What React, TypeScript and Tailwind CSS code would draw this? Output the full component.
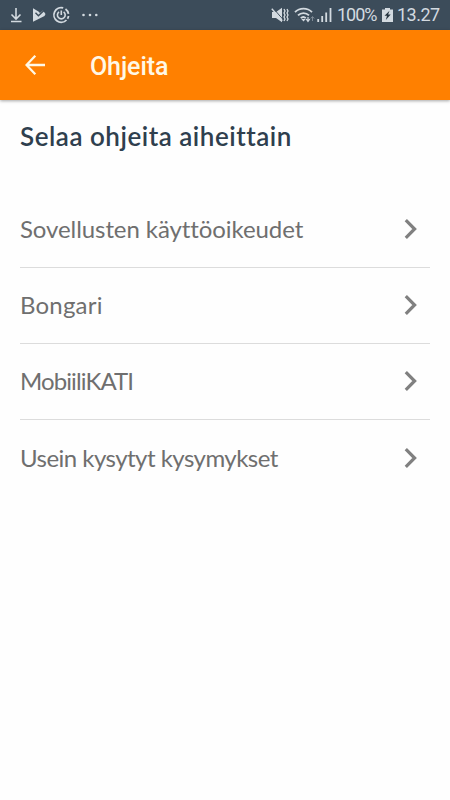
import clsx from 'clsx';

const topics = [
  { label: 'Sovellusten käyttöoikeudet', tracking: 'tracking-[-0.08px]' },
  { label: 'Bongari', tracking: 'tracking-[0.2px]' },
  { label: 'MobiiliKATI', tracking: 'tracking-[-0.9px]' },
  { label: 'Usein kysytyt kysymykset', tracking: 'tracking-[-0.53px]' },
];

function StatusBar() {
  return (
    <div className="flex h-[30px] items-center bg-[#3c4c5a] font-['Roboto',sans-serif] text-[#d3dae0]">
      {/* Notifications */}
      <svg className="h-[30px] w-[110px]" viewBox="0 0 110 30" fill="none" stroke="currentColor">
        <path d="M16 8v11M11.5 14.5 16 19l4.500-4.500M11 21.500h10.500" strokeWidth="1.600" />
        <path d="M33 8.300 38.500 11.500 40 13l3-2.500 2.500 3.500-1 2L33 21.800Z" fill="currentColor" stroke="none" />
        <path d="m35.500 12.800 2.900 3 5.600-5.300" stroke="#3c4c5a" strokeWidth="1.400" />
        <path d="M63.200 7.900A7.300 7.300 0 1 0 66.500 20M65.500 8.900a7.300 7.300 0 0 1 3 5M68.500 16a7.300 7.300 0 0 1-1 2.800" strokeWidth="1.800" />
        <path d="M59 11.800a3.900 3.900 0 1 0 4.600 0M61.300 10.500v4.500" strokeWidth="1.600" />
        <g fill="currentColor" stroke="none">
          <circle cx="83.500" cy="15" r="1.300" />
          <circle cx="90" cy="15" r="1.300" />
          <circle cx="96.300" cy="15" r="1.300" />
        </g>
      </svg>

      {/* Sound, wifi and signal */}
      <svg className="ml-auto h-[30px] w-[64px]" viewBox="270 0 64 30" fill="none" stroke="currentColor">
        <path d="M272 12h4l6-4.300v14.600l-6-4.300h-4Z" fill="currentColor" stroke="none" />
        <path d="m272.800 7.800 10.500 12" stroke="#3c4c5a" strokeWidth="1" />
        <path d="m271.800 8.800 10.500 12" strokeWidth="1.400" />
        <path d="m284 9 1 2-1 2 1 2-1 2 1 2-1 2M287 9l1 2-1 2 1 2-1 2 1 2-1 2" strokeWidth="1.300" />
        <path d="M295 12.200c4.500-4.700 12.500-4.700 17 0M298 15.300c3-3 8-3 11 0M300.800 18.200c1.500-1.500 3.500-1.500 5 0" strokeWidth="1.800" />
        <path d="m301.300 19 2.200 2.500 2.200-2.500Z" fill="currentColor" stroke="none" />
        <path d="M308 17v4M306.200 19l1.800 2.500 1.800-2.500" strokeWidth="1.200" />
        <path d="M312.500 21v-4M310.800 18.500l1.700-2 1.700 2" stroke="#7f8b96" strokeWidth="1" />
        <path d="M318.200 22v-3M322.200 22v-6M326.200 22v-9.500M330.500 22V8" strokeWidth="1.800" />
      </svg>
      <span className="ml-[3px] w-[40px] whitespace-nowrap text-[18px] leading-[30px] tracking-[-1px]">100%</span>
      <svg className="ml-[5px] h-[30px] w-[11px]" viewBox="382 0 11 30">
        <path d="M385 8h5v1.500h3V22h-11V9.500h3Z" fill="currentColor" />
        <path d="m389.500 10.800-5 5h2.500l-1.200 4.200 4.900-5.500h-2.600Z" fill="#26343f" />
      </svg>
      <span className="ml-[4px] mr-[9px] w-[44px] whitespace-nowrap text-[18px] leading-[30px] tracking-[-0.5px]">13.27</span>
    </div>
  );
}

function Header() {
  return (
    <header className="flex h-[70px] items-center bg-[#ff8000] shadow-[0_1px_3px_rgba(0,0,0,0.35)]">
      <svg className="ml-[25px] h-[20px] w-[20px]" viewBox="0 0 20 20" fill="none" stroke="#fff8e6" strokeWidth="2.300">
        <path d="M20 10H2M10.300 .8 1.500 10l8.800 9.200" />
      </svg>
      <h1 className="ml-[45px] mt-[3px] font-['Roboto',sans-serif] text-[25px] font-medium tracking-[-0.1px] text-[#fff8e6]">
        Ohjeita
      </h1>
    </header>
  );
}

export default function App() {
  return (
    <div className="h-[800px] w-[450px] overflow-hidden bg-[#fefefe]">
      <StatusBar />
      <Header />
      <main className="px-5 font-['Lato',sans-serif]">
        <h2 className="mt-[18px] h-[36px] whitespace-nowrap text-[26px] font-semibold leading-[36px] tracking-[0.52px] text-[#2f3f4e]">
          Selaa ohjeita aiheittain
        </h2>
        <ul className="mt-[37.5px]">
          {topics.map((topic, i) => (
            <li
              key={topic.label}
              className={clsx(
                'flex h-[76.2px] items-center justify-between border-[#dcdcdc]',
                i < topics.length - 1 && 'border-b',
              )}
            >
              <span className={clsx('-mt-px whitespace-nowrap text-[24px] leading-[30px] text-[#6f6f6f]', topic.tracking)}>
                {topic.label}
              </span>
              <svg className="mr-[12px] h-[20px] w-[14px]" viewBox="0 0 14 20" fill="none" stroke="#808080" strokeWidth="3.200">
                <path d="m1.800 1.200 8.800 8.800-8.800 8.800" />
              </svg>
            </li>
          ))}
        </ul>
      </main>
    </div>
  );
}
